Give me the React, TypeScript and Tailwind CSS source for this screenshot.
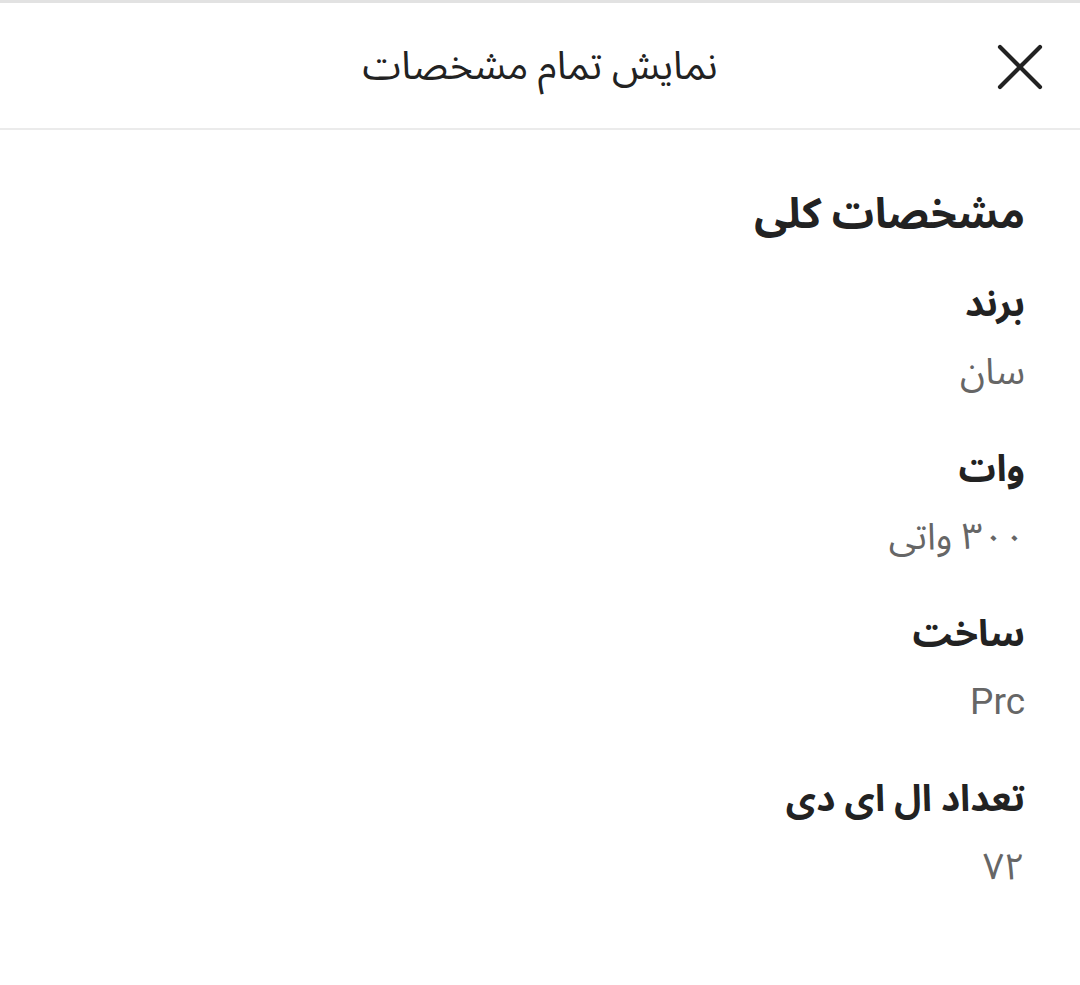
import { X } from 'lucide-react'

const specs = [
  { label: 'برند', value: 'سان' },
  { label: 'وات', value: '۳۰۰ واتی' },
  { label: 'ساخت', value: 'Prc' },
  { label: 'تعداد ال ای دی', value: '۷۲' },
]

export default function App() {
  return (
    <div
      dir="rtl"
      className="w-[1080px] h-[985px] bg-white text-[#222]"
      style={{ fontFamily: 'Roboto, "Noto Sans Arabic", "DejaVu Sans", sans-serif' }}
    >
      <div className="h-[3px] bg-[#e2e2e2]" />
      <header className="relative h-[127px] flex items-center justify-center border-b-2 border-[#ebebeb]">
        <h1 className="text-[39px] text-[#222] leading-[60px]">نمایش تمام مشخصات</h1>
        <button className="absolute right-[20px] top-[24px] text-[#222]">
          <X size={80} strokeWidth={1.25} />
        </button>
      </header>
      <main className="px-[55px] pt-[51px]">
        <h2 className="text-[42px] font-bold leading-[66px] mb-[27px]">مشخصات کلی</h2>
        <div className="flex flex-col gap-[37px]">
          {specs.map(s => (
            <div key={s.label} className="flex flex-col gap-[8px]">
              <div className="text-[37px] font-bold leading-[60px]">{s.label}</div>
              <div className="text-[37px] text-[#666] leading-[60px]">{s.value}</div>
            </div>
          ))}
        </div>
      </main>
    </div>
  )
}
